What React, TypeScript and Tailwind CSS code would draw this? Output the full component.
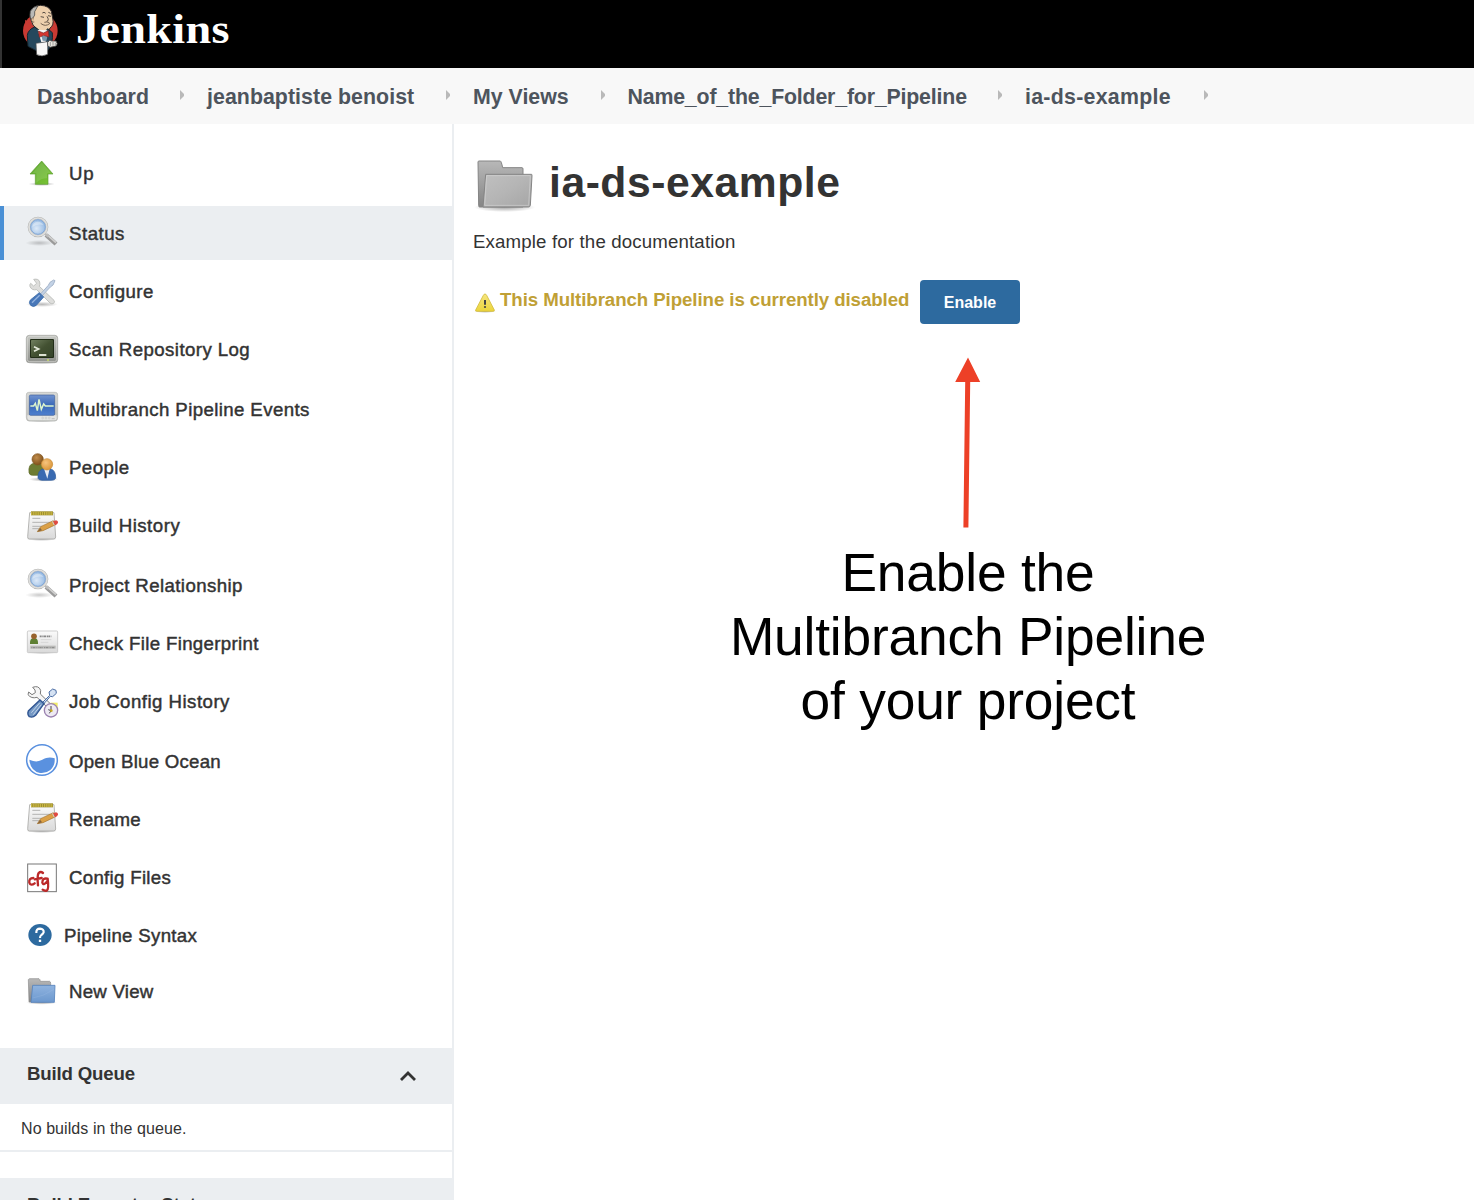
import type { ReactNode } from "react";

function Gradients() {
  return (
    <svg width="0" height="0" className="absolute" aria-hidden="true">
      <defs>
        <linearGradient id="green" x1="0" y1="0" x2="1" y2="1"><stop offset="0" stopColor="#5aa62c" /><stop offset="1" stopColor="#7cc636" /></linearGradient>
        <radialGradient id="lens" cx="0.4" cy="0.6" r="0.7"><stop offset="0" stopColor="#dce9f8" /><stop offset="1" stopColor="#8fb5e0" /></radialGradient>
        <linearGradient id="metal" x1="0" y1="0" x2="0" y2="1"><stop offset="0" stopColor="#c6c8c3" /><stop offset="1" stopColor="#8f918c" /></linearGradient>
        <linearGradient id="plastic" x1="0" y1="0" x2="0" y2="1"><stop offset="0" stopColor="#d8d9d6" /><stop offset="1" stopColor="#bdbebb" /></linearGradient>
        <linearGradient id="term" x1="0" y1="0" x2="1" y2="1"><stop offset="0" stopColor="#718060" /><stop offset="0.5" stopColor="#435132" /><stop offset="1" stopColor="#35442a" /></linearGradient>
        <linearGradient id="scope" x1="0" y1="0" x2="0" y2="1"><stop offset="0" stopColor="#7193d0" /><stop offset="0.5" stopColor="#3a69b8" /><stop offset="1" stopColor="#4f80cf" /></linearGradient>
        <radialGradient id="brown" cx="0.4" cy="0.35" r="0.65"><stop offset="0" stopColor="#c08c4c" /><stop offset="1" stopColor="#81511b" /></radialGradient>
        <radialGradient id="orange" cx="0.4" cy="0.35" r="0.7"><stop offset="0" stopColor="#f6c47e" /><stop offset="1" stopColor="#d99436" /></radialGradient>
        <linearGradient id="paper" x1="0" y1="0" x2="0" y2="1"><stop offset="0" stopColor="#fbfbfb" /><stop offset="1" stopColor="#d9d9d9" /></linearGradient>
        <linearGradient id="blueFolder" x1="0" y1="0" x2="0" y2="1"><stop offset="0" stopColor="#8fb3df" /><stop offset="1" stopColor="#6c98ce" /></linearGradient>
        <linearGradient id="grayBack" x1="0" y1="0" x2="0" y2="1"><stop offset="0" stopColor="#b8b8b8" /><stop offset="1" stopColor="#858585" /></linearGradient>
        <linearGradient id="grayFront" x1="0" y1="0" x2="1" y2="1"><stop offset="0" stopColor="#c0c0c0" /><stop offset="0.5" stopColor="#b5b5b5" /><stop offset="1" stopColor="#a5a5a5" /></linearGradient>
        <linearGradient id="warn" x1="0" y1="0" x2="0" y2="1"><stop offset="0" stopColor="#f5e580" /><stop offset="1" stopColor="#ecd53a" /></linearGradient>
        <radialGradient id="shade"><stop offset="0" stopColor="#000" stopOpacity="0.35" /><stop offset="1" stopColor="#000" stopOpacity="0" /></radialGradient>
      </defs>
    </svg>
  );
}

function Icon({ box, w = "w-8", shift = "", children }: { box: string; w?: string; shift?: string; children: ReactNode }) {
  return (
    <svg viewBox={box} className={`h-8 shrink-0 overflow-visible ${w} ${shift}`} preserveAspectRatio="xMinYMin meet" aria-hidden="true">
      {children}
    </svg>
  );
}

const Up = () => (
  <Icon box="78 21 96 96">
    <ellipse cx="125" cy="102" rx="40" ry="6" fill="url(#shade)" />
    <path d="M125 33 L159 72 H144 V103 H106 V72 H90 Z" fill="url(#green)" stroke="#5f9e35" strokeWidth="2" strokeLinejoin="round" />
    <path d="M125 37 L153 70 H141 V85 Q125 84 109 98 V70 H97 Z" fill="#fff" opacity="0.12" />
  </Icon>
);

const Magnifier = () => (
  <Icon box="78 201 96 96">
    <ellipse cx="118" cy="279" rx="42" ry="9" fill="url(#shade)" opacity="0.6" />
    <path d="M138 255 L168 282" stroke="#9a9a9a" strokeWidth="13" />
    <path d="M140 253 L168 278" stroke="#d0d0cf" strokeWidth="5" />
    <path d="M134 250 L145 260" stroke="#bbb" strokeWidth="7" />
    <circle cx="114" cy="231" r="27" fill="#e7e7e5" stroke="#b3b3b1" strokeWidth="8" />
    <circle cx="114" cy="231" r="27" fill="none" stroke="#dededc" strokeWidth="5" />
    <circle cx="114" cy="231" r="22" fill="url(#lens)" stroke="#7ea6d8" strokeWidth="3" />
    <path d="M97 231 Q98 216 113 215 Q126 216 130 225 Q112 221 97 231Z" fill="#fff" opacity="0.35" />
  </Icon>
);

const Tools = () => (
  <Icon box="78 375 96 96">
    <ellipse cx="126" cy="463" rx="48" ry="8" fill="url(#shade)" opacity="0.8" />
    <path d="M101 388 Q116 385 119 396 Q121 405 118 409 L162 451 Q166 456 161 460 Q156 464 150 459 L110 419 Q96 422 90 410 Q88 404 92 400 L101 408 L110 400 Z" fill="#dededc" stroke="#b8bab7" strokeWidth="2.5" strokeLinejoin="round" />
    <path d="M165 392 L159 405 L151 411 L122 442 L117 437 L145 406 L150 397 L161 390 Z" fill="#c3d2e6" stroke="#a6b6cb" strokeWidth="3" />
    <path d="M118 428 L131 441 L109 466 Q100 473 92 466 Q85 458 91 450 Z" fill="#4877b8" stroke="#396aa8" strokeWidth="2.5" />
    <path d="M119 436 L96 458" stroke="#92b2df" strokeWidth="4" />
  </Icon>
);

const Terminal = () => (
  <Icon box="78 39 96 96">
    <ellipse cx="126" cy="126" rx="50" ry="7" fill="url(#shade)" />
    <rect x="79" y="46" width="94" height="82" rx="9" fill="url(#metal)" stroke="#9c9d99" strokeWidth="2" />
    <rect x="82" y="49" width="88" height="76" rx="7" fill="none" stroke="#dcddd9" strokeWidth="2" />
    <rect x="90" y="57" width="72" height="57" rx="3" fill="#222d18" />
    <rect x="93" y="60" width="66" height="51" rx="2" fill="url(#term)" />
    <path d="M102 80 L116 87 L102 94" fill="none" stroke="#e5eadc" strokeWidth="5" />
    <path d="M117 105 H139" stroke="#dce1d3" strokeWidth="6" />
    <circle cx="144" cy="120" r="3" fill="#c9db68" />
  </Icon>
);

const Monitor = () => (
  <Icon box="78 219 96 96">
    <ellipse cx="126" cy="302" rx="48" ry="5" fill="url(#shade)" />
    <path d="M86 217 H166 Q173 217 173 225 V292 Q173 303 165 303 H87 Q79 303 79 292 V225 Q79 217 86 217Z" fill="url(#plastic)" stroke="#b4b5b2" strokeWidth="2" />
    <path d="M82 286 H170 V296 Q169 301 162 301 H89 Q82 300 82 294Z" fill="#e5e5e3" />
    <rect x="88" y="225" width="76" height="61" rx="4" fill="url(#scope)" stroke="#3e5f9b" strokeWidth="2" />
    <path d="M91 258 H101 L106 250 L112 272 L117 238 L124 268 L131 252 L136 258 H161" fill="none" stroke="#ddf5cd" strokeWidth="4.5" />
    {[128, 138, 148].map((x) => <circle key={x} cx={x} cy="294" r="3" fill="#ddd" stroke="#bbb" />)}
    <path d="M155 296 H164" stroke="#aaa" strokeWidth="2" />
  </Icon>
);

const People = () => (
  <Icon box="78 393 96 96">
    <ellipse cx="131" cy="478" rx="45" ry="7" fill="url(#shade)" />
    <path d="M87 458 Q84 433 101 430 H126 Q140 435 141 466 H98 Q89 466 87 458Z" fill="#6d7c32" stroke="#5f6d2a" strokeWidth="2" />
    <circle cx="113" cy="418" r="17" fill="url(#brown)" stroke="#805420" strokeWidth="2" />
    <path d="M114 475 Q112 450 131 446 H151 Q168 451 167 475 Q164 481 155 481 H126 Q117 481 114 475Z" fill="#396ab1" stroke="#305d9f" strokeWidth="2" />
    <path d="M132 446 H149 L142 476 Z" fill="#e8edf5" />
    <circle cx="141" cy="433" r="17" fill="url(#orange)" stroke="#c58a35" strokeWidth="2" />
  </Icon>
);

const Notepad = ({ shift = "" }: { shift?: string }) => (
  <Icon box="78 57 96 96" shift={shift}>
    <ellipse cx="125" cy="147" rx="46" ry="6" fill="url(#shade)" />
    <path d="M89 68 H162 L167 141 Q167 147 160 147 H88 Q82 147 83 140 Z" fill="url(#paper)" stroke="#a8a8a6" strokeWidth="2.5" />
    <path d="M93 70 H159" stroke="#97882a" strokeWidth="12" />
    <path d="M93 70 H159" stroke="#c9b744" strokeWidth="10" strokeDasharray="4 2.5" />
    <path d="M97 85 H121 M97 97 H151 M97 109 H125 M97 116 H122" stroke="#b4b4b2" strokeWidth="3" />
    <path d="M112 125 L122 110 L160 92 L167 104 L129 122 Z" fill="#dba046" stroke="#a5742d" strokeWidth="2" />
    <path d="M112 125 L121 114 L126 121 Z" fill="#86633d" />
    <path d="M160 94 L168 91 Q175 92 174 98 L171 103 L165 106Z" fill="#df4a43" />
    <path d="M157 94 L163 106" stroke="#ccc" strokeWidth="3" />
  </Icon>
);

const IdCard = () => (
  <Icon box="78 411 96 96">
    <ellipse cx="127" cy="488" rx="47" ry="4" fill="url(#shade)" />
    <rect x="82" y="423" width="91" height="65" rx="3" fill="url(#paper)" stroke="#c4c4c4" strokeWidth="2.5" />
    <path d="M90 462 Q89 447 98 445 H106 Q115 447 114 462Z" fill="#5e8033" />
    <circle cx="102" cy="439" r="8.5" fill="#98632d" />
    <path d="M119 439 H154" stroke="#888" strokeWidth="5" strokeDasharray="6 2 4 1" />
    <path d="M122 449 H154 M122 457 H145" stroke="#ccc" strokeWidth="2" />
    <rect x="91" y="467" width="76" height="9" fill="#b9b9b7" />
    <path d="M94 473 H165" stroke="#888" strokeWidth="3" strokeDasharray="3 2 7 2 2 3" />
  </Icon>
);

const ToolsClock = () => (
  <Icon box="78 45 96 96">
    <path d="M98 52 Q116 45 122 61 L121 72 L157 107 L147 117 L111 82 Q94 87 84 74 L86 66 L96 74 L106 68 L105 60 Z" fill="#f5f5f5" stroke="#7a7a7a" strokeWidth="3" strokeLinejoin="round" />
    <path d="M126 99 L149 76 L147 66 L158 57 L168 61 L169 70 L158 80 L151 79 L130 103" fill="#d5e2f3" stroke="#4b6da4" strokeWidth="3" />
    <rect x="152" y="98" width="21" height="20" fill="#f1ec65" />
    <circle cx="153" cy="121" r="20" fill="#eeeaf3" stroke="#9b83b0" strokeWidth="4" />
    <path d="M153 108 V122 L145 119 M153 122 L148 130" fill="none" stroke="#444" strokeWidth="3" />
    <circle cx="154" cy="122" r="4" fill="#c7aa25" />
    <path d="M120 90 L132 101 L107 136 Q98 144 88 140 Q81 133 85 123 Z" fill="#7397c4" stroke="#2f5491" strokeWidth="4" />
    <path d="M119 99 L94 128 M124 104 L100 134" stroke="#c4d5ea" strokeWidth="3" />
  </Icon>
);

const Ocean = () => (
  <Icon box="78 225 96 96">
    <circle cx="126" cy="270" r="46" fill="#fff" stroke="#5990df" strokeWidth="4.5" />
    <path d="M88 269 Q102 275 112 274 C128 272 139 256 164 265 Q166 287 151 300 Q138 311 120 309 Q91 303 88 269Z" fill="#5a91df" />
  </Icon>
);

const Cfg = () => (
  <Icon box="78 63 96 96">
    <rect x="83" y="72" width="86" height="83" fill="#fff" stroke="#777" strokeWidth="3" />
    <g fill="none" stroke="#bc2929" strokeWidth="7" strokeLinecap="round" strokeLinejoin="round">
      <path d="M100 114 Q86 114 88 128 Q92 139 104 130" />
      <path d="M129 99 Q122 93 116 99 Q111 106 114 136 M104 118 L125 114" />
      <path d="M142 116 Q127 113 127 128 Q131 139 143 122 M143 116 Q147 147 141 151 Q135 154 128 149" />
    </g>
  </Icon>
);

const Help = () => (
  <Icon box="78 237 81 96" w="w-[27px]">
    <ellipse cx="120" cy="285" rx="35" ry="33" fill="#2d6a9f" />
    <path d="M109 279 Q108 266 120 266 Q132 267 131 277 Q130 281 124 285 Q120 288 120 294" fill="none" stroke="#fff" strokeWidth="6.5" />
    <rect x="116.5" y="299" width="7" height="7" fill="#fff" />
  </Icon>
);

const BlueFolder = () => (
  <Icon box="78 405 96 96">
    <ellipse cx="125" cy="488" rx="46" ry="6" fill="url(#shade)" />
    <path d="M85 419 Q86 416 90 416 H117 Q120 417 121 424 H149 Q152 425 152 430 V486 H87 Z" fill="url(#grayBack)" stroke="#8c8c8c" strokeWidth="2" />
    <path d="M98 436 H165 L163 487 H93 Z" fill="url(#blueFolder)" stroke="#5583bd" strokeWidth="2.5" />
    <path d="M98 474 Q130 470 162 448" stroke="#b0cae9" strokeWidth="2" fill="none" opacity="0.3" />
  </Icon>
);

function Butler() {
  return (
    <svg viewBox="60 0 120 180" className="h-[60px] w-10 shrink-0" aria-hidden="true">
      <circle cx="121" cy="92" r="52" fill="#c83a33" />
      <path d="M75 59 Q79 110 88 140 L109 151 L121 94 Z" fill="#c83a33" />
      <path d="M91 35 Q98 17 122 16 Q146 17 154 34 L158 54 Q163 76 150 84 L146 92 Q129 102 113 88 Q95 76 94 62 Q87 50 91 35Z" fill="#eed1ae" stroke="#302b2b" strokeWidth="3" />
      <path d="M91 34 Q97 20 114 17 L104 35 Q106 47 100 52 L100 66 Q87 56 91 34Z" fill="#b9b9b6" stroke="#333" strokeWidth="2" />
      <path d="M100 53 Q92 53 95 62 Q98 69 103 66" fill="#e7c29c" stroke="#635245" strokeWidth="2" />
      <path d="M122 50 L132 52 M144 47 L153 49 M127 39 Q132 34 137 40 M145 37 L152 40 M141 49 Q149 62 140 64" fill="none" stroke="#36302d" strokeWidth="2.5" />
      <path d="M122 70 Q136 82 150 70 M133 67 Q141 64 148 68" fill="none" stroke="#73604f" strokeWidth="3" />
      <path d="M104 81 Q84 89 82 106 L84 139 L107 151 H144 Q160 130 157 98 L143 86 L132 101 Z" fill="#25485d" stroke="#14262f" strokeWidth="3" />
      <path d="M113 89 L142 91 L137 127 H124 Z" fill="#f5f5f5" />
      <path d="M124 107 L143 106 L139 123 L128 122Z" fill="#7794aa" />
      <path d="M115 93 L130 99 L145 92 L147 111 L131 106 L118 112 Z" fill="#d33530" stroke="#762526" strokeWidth="2" />
      <path d="M108 130 L143 125 V163 Q126 172 110 164 Z" fill="#f8f8f7" stroke="#505050" strokeWidth="2" />
      <path d="M143 127 Q149 117 155 123 L168 123 Q175 132 168 138 L150 142 L143 137Z" fill="#e9e6df" stroke="#444" strokeWidth="2.5" />
      <path d="M151 126 V138 M159 126 V137 M166 128 V135" stroke="#777" strokeWidth="2" />
    </svg>
  );
}

const menu = [
  { label: "Up", icon: <Up />, row: "", track: "tracking-[0.8px]" },
  { label: "Status", icon: <Magnifier />, row: "mt-1.5 bg-[#ebeef1] shadow-[inset_4px_0_0_#4a90d5]", track: "tracking-[0.5px]" },
  { label: "Configure", icon: <Tools />, row: "mt-1", track: "tracking-[0.42px]" },
  { label: "Scan Repository Log", icon: <Terminal />, row: "mt-1", track: "tracking-[0.42px]" },
  { label: "Multibranch Pipeline Events", icon: <Monitor />, row: "mt-1.5", track: "tracking-[0.39px]" },
  { label: "People", icon: <People />, row: "mt-1", track: "tracking-[0.42px]" },
  { label: "Build History", icon: <Notepad />, row: "mt-1", track: "tracking-[0.5px]" },
  { label: "Project Relationship", icon: <Magnifier />, row: "mt-1.5", track: "tracking-[0.39px]" },
  { label: "Check File Fingerprint", icon: <IdCard />, row: "mt-1", track: "tracking-[0.33px]" },
  { label: "Job Config History", icon: <ToolsClock />, row: "mt-1", track: "tracking-[0.47px]" },
  { label: "Open Blue Ocean", icon: <Ocean />, row: "mt-1.5", track: "tracking-[0.24px]" },
  { label: "Rename", icon: <Notepad shift="-translate-y-0.5" />, row: "mt-1", track: "tracking-[0.22px]" },
  { label: "Config Files", icon: <Cfg />, row: "mt-1", track: "tracking-[0.3px]" },
  { label: "Pipeline Syntax", icon: <Help />, row: "mt-1", track: "tracking-[0.3px]" },
  { label: "New View", icon: <BlueFolder />, row: "mt-0.5", track: "tracking-[0.24px]" },
];

const crumbs = [
  { label: "Dashboard", cell: "w-[170px]", track: "tracking-[0.07px]" },
  { label: "jeanbaptiste benoist", cell: "w-[266px]", track: "tracking-[0.05px]" },
  { label: "My Views", cell: "w-[154.5px]", track: "" },
  { label: "Name_of_the_Folder_for_Pipeline", cell: "w-[397.5px]", track: "tracking-[-0.18px]" },
  { label: "ia-ds-example", cell: "w-[206px]", track: "tracking-[0.28px]" },
];

export default function App() {
  return (
    <div className="flex h-[1200px] w-[1474px] flex-col overflow-hidden bg-white font-['Liberation_Sans',Arial,sans-serif] text-[#333]">
      <Gradients />
      <header className="flex h-[68px] shrink-0 border-l-2 border-[#333] bg-black pl-[18px]">
        <Butler />
        <span className="ml-4 origin-left scale-x-110 font-['Liberation_Serif',serif] text-[42px] leading-[58px] font-bold tracking-[0.3px] text-white">Jenkins</span>
      </header>
      <nav className="flex h-14 shrink-0 items-center bg-[#f8f8f8] pl-[37px] text-[21.33px] font-bold text-[#4d545d]">
        {crumbs.map((c) => (
          <div key={c.label} className={`flex shrink-0 items-center ${c.cell}`}>
            <span className={`translate-y-0.5 whitespace-nowrap ${c.track}`}>{c.label}</span>
            <svg viewBox="0 0 4 10" className="mr-[23px] ml-auto h-2.5 w-1 -translate-y-px" aria-hidden="true"><path d="M0 0 L4 4 V6 L0 10Z" fill="#b9b9b9" /></svg>
          </div>
        ))}
      </nav>
      <div className="flex min-h-0 flex-1">
        <aside className="flex w-[454px] shrink-0 flex-col border-r-2 border-[#ebeef1] pt-[22px]">
          {menu.map((m) => (
            <a key={m.label} className={`flex h-[54px] shrink-0 items-center pl-[26px] ${m.row}`}>
              {m.icon}
              <span className={`ml-[11px] translate-y-px text-[18.67px] leading-6 whitespace-nowrap [-webkit-text-stroke:0.45px_#333] ${m.track}`}>{m.label}</span>
            </a>
          ))}
          <div className="mt-[30px] flex h-14 shrink-0 items-center justify-between bg-[#ebeef1] pr-[35px] pl-[27px]">
            <h2 className="-translate-y-0.5 text-[18.67px] font-bold tracking-[-0.18px]">Build Queue</h2>
            <svg viewBox="0 0 18 12" className="h-3 w-[18px]" aria-hidden="true"><path d="M2 10 L9 3 L16 10" fill="none" stroke="#333" strokeWidth="2.8" /></svg>
          </div>
          <p className="h-12 shrink-0 border-b-2 border-[#ebeef1] pl-[21px] text-base leading-[49px] tracking-[0.08px]">No builds in the queue.</p>
          <div className="mt-[26px] h-14 shrink-0 bg-[#ebeef1] pl-[27px]">
            <h2 className="text-[18.67px] leading-[54px] font-bold tracking-[-0.18px]">Build Executor Status</h2>
          </div>
        </aside>
        <main className="flex flex-1 flex-col pl-[19px]">
          <div className="mt-8 flex h-[60px] items-center">
            <svg viewBox="40 48 192 180" className="h-[60px] w-16" aria-hidden="true">
              <ellipse cx="135" cy="202" rx="92" ry="14" fill="url(#shade)" />
              <path d="M55 66 Q55 63 58 63 H122 Q125 64 129 83 H187 Q190 83 190 87 V201 H60 Q57 201 57 197 Z" fill="url(#grayBack)" stroke="#858585" strokeWidth="3" />
              <path d="M78 103 H215 Q218 103 217 107 L212 196 Q211 201 207 201 H70 Z" fill="url(#grayFront)" stroke="#858585" strokeWidth="3" />
              <path d="M81 107 H212 L207 196 H75 Z" fill="none" stroke="#d1d1d1" strokeWidth="2" />
            </svg>
            <h1 className="ml-3 -translate-y-1 text-[42.67px] leading-[60px] font-bold tracking-[0.53px]">ia-ds-example</h1>
          </div>
          <p className="mt-[14px] text-[18.67px] leading-6 tracking-[0.15px]">Example for the documentation</p>
          <div className="mt-[26px] flex h-11 items-start">
            <svg viewBox="42 458 66 66" className="mt-3 h-[22px] w-[22px] translate-x-px" aria-hidden="true">
              <ellipse cx="75" cy="516" rx="33" ry="5" fill="url(#shade)" />
              <path d="M75 464 Q78 464 80 468 L103 512 Q104 516 99 516 H51 Q45 516 47 512 L70 468 Q72 464 75 464Z" fill="url(#warn)" stroke="#d3bc3d" strokeWidth="2.5" />
              <path d="M75 482 V496" stroke="#444" strokeWidth="6" /><circle cx="75" cy="503" r="3.3" fill="#444" />
            </svg>
            <strong className="ml-[5px] w-[420px] text-[18.67px] leading-[39px] tracking-[-0.07px] whitespace-nowrap text-[#c0a035]">This Multibranch Pipeline is currently disabled</strong>
            <button className="h-11 w-[100px] rounded bg-[#2d6a9f] pt-0.5 text-base font-bold text-white">Enable</button>
          </div>
          <svg viewBox="0 0 26 172" className="mt-8 ml-[482px] h-[172px] w-[26px]" aria-hidden="true">
            <path d="M13 1.5 L25.2 26 H15.2 L13.4 171.5 H8.4 L10.2 26 H0.2Z" fill="#ed4027" />
          </svg>
          <p className="mt-[13px] ml-[245px] w-[500px] text-center text-[53.33px] leading-[64px] tracking-[-0.2px] text-black">
            <span className="block">Enable the</span>
            <span className="block">Multibranch Pipeline</span>
            <span className="block">of your project</span>
          </p>
        </main>
      </div>
    </div>
  );
}
